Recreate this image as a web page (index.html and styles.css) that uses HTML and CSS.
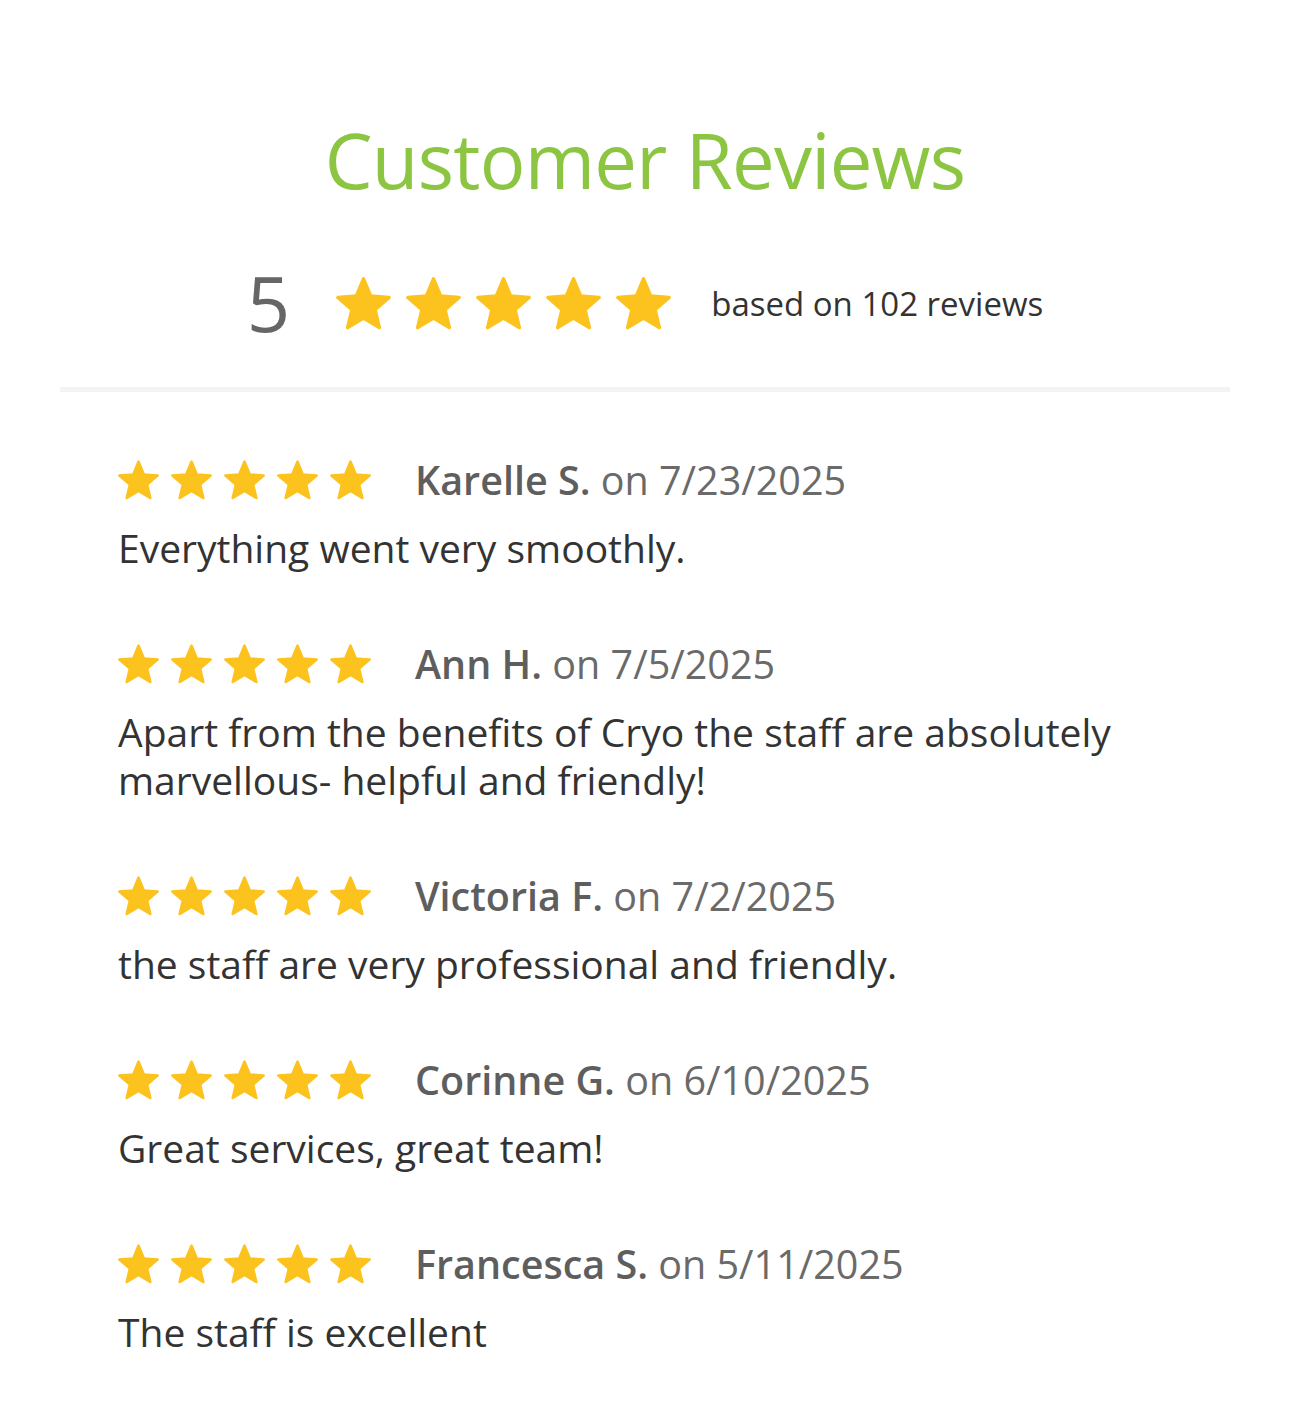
FILE: index.html
```html
<!DOCTYPE html>
<html lang="en">
<head>
<meta charset="utf-8">
<title>Customer Reviews</title>
<link rel="stylesheet" href="styles.css">
</head>
<body>
<svg width="0" height="0" class="defs">
  <defs>
    <symbol id="star" viewBox="3 1 94 90">
      <path d="M50 4L62.17 33.25 93.75 35.79 69.69 56.4 77.04 87.21 50 70.7 22.96 87.21 30.31 56.4 6.25 35.79 37.83 33.25Z" fill="#fcc21d" stroke="#fcc21d" stroke-width="6" stroke-linejoin="round"/>
    </symbol>
  </defs>
</svg>
<main class="reviews">
  <h1 class="title">Customer Reviews</h1>
  <div class="summary">
    <span class="score">5</span>
    <span class="stars stars-big">
      <svg><use href="#star"/></svg><svg><use href="#star"/></svg><svg><use href="#star"/></svg><svg><use href="#star"/></svg><svg><use href="#star"/></svg>
    </span>
    <span class="based">based on 102 reviews</span>
  </div>
  <hr class="divider">
  <ul class="list">
    <li class="review">
      <div class="head">
        <span class="stars stars-small"><svg><use href="#star"/></svg><svg><use href="#star"/></svg><svg><use href="#star"/></svg><svg><use href="#star"/></svg><svg><use href="#star"/></svg></span>
        <span class="meta"><b class="name">Karelle S.</b> on 7/23/2025</span>
      </div>
      <p class="text">Everything went very smoothly.</p>
    </li>
    <li class="review">
      <div class="head">
        <span class="stars stars-small"><svg><use href="#star"/></svg><svg><use href="#star"/></svg><svg><use href="#star"/></svg><svg><use href="#star"/></svg><svg><use href="#star"/></svg></span>
        <span class="meta"><b class="name">Ann H.</b> on 7/5/2025</span>
      </div>
      <p class="text">Apart from the benefits of Cryo the staff are absolutely marvellous- helpful and friendly!</p>
    </li>
    <li class="review">
      <div class="head">
        <span class="stars stars-small"><svg><use href="#star"/></svg><svg><use href="#star"/></svg><svg><use href="#star"/></svg><svg><use href="#star"/></svg><svg><use href="#star"/></svg></span>
        <span class="meta"><b class="name">Victoria F.</b> on 7/2/2025</span>
      </div>
      <p class="text">the staff are very professional and friendly.</p>
    </li>
    <li class="review">
      <div class="head">
        <span class="stars stars-small"><svg><use href="#star"/></svg><svg><use href="#star"/></svg><svg><use href="#star"/></svg><svg><use href="#star"/></svg><svg><use href="#star"/></svg></span>
        <span class="meta"><b class="name">Corinne G.</b> on 6/10/2025</span>
      </div>
      <p class="text">Great services, great team!</p>
    </li>
    <li class="review">
      <div class="head">
        <span class="stars stars-small"><svg><use href="#star"/></svg><svg><use href="#star"/></svg><svg><use href="#star"/></svg><svg><use href="#star"/></svg><svg><use href="#star"/></svg></span>
        <span class="meta"><b class="name">Francesca S.</b> on 5/11/2025</span>
      </div>
      <p class="text">The staff is excellent</p>
    </li>
  </ul>
</main>
</body>
</html>
```

FILE: styles.css
```css
* { box-sizing: border-box; }
html, body { margin: 0; padding: 0; background: #fff; }
body { font-family: "Open Sans", "Liberation Sans", sans-serif; color: #333; }
.defs { position: absolute; width: 0; height: 0; overflow: hidden; }

.reviews { width: 1170px; margin: 0 auto; padding-top: 122px; }

.title {
  margin: 0;
  text-align: center;
  font-weight: 400;
  font-size: 76px;
  line-height: 76px;
  color: #8bc541;
  letter-spacing: -0.7px;
}

.summary {
  display: flex;
  align-items: center;
  justify-content: center;
  margin-top: 75px;
  height: 60px;
}
.score { font-size: 76px; line-height: 60px; color: #666; margin-right: 46px; }
.based { font-size: 33px; color: #333; margin-left: 40px; }

.stars { display: flex; }
.stars-big { gap: 15px; }
.stars-big svg { width: 55px; height: 53px; }
.stars-small { gap: 12px; }
.stars-small svg { width: 41px; height: 40px; }

.divider {
  border: 0;
  height: 5px;
  background: #f3f3f3;
  margin: 54px 0 0;
}

.list { list-style: none; margin: 0; padding: 68px 0 0 58px; }
.review { margin-bottom: 72px; }
.head { display: flex; align-items: center; height: 40px; }
.meta { font-size: 39.5px; line-height: 40px; color: #6a6a6a; margin-left: 44px; }
.name { font-weight: 600; color: #5e5e5e; }
.text { margin: 24px 0 0; font-size: 39px; line-height: 48px; color: #333; max-width: 1040px; }
```
